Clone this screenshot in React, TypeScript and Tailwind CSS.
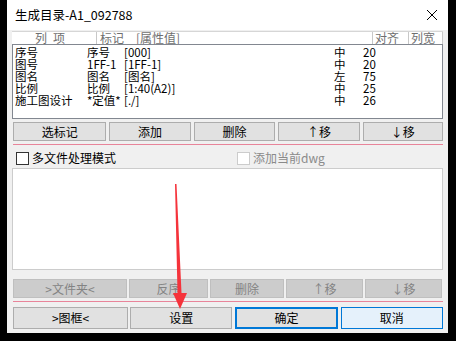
import React from "react";

const font = { fontFamily: '"Noto Sans CJK SC", "Liberation Sans", sans-serif' };

const rows = [
  ["序号", "序号", "[000]", "中", "20"],
  ["图号", "1FF-1", "[1FF-1]", "中", "20"],
  ["图名", "图名", "[图名]", "左", "75"],
  ["比例", "比例", "[1:40(A2)]", "中", "25"],
  ["施工图设计", "*定值*", "[./]", "中", "26"],
];

function Btn({ children, w, disabled }: { children: React.ReactNode; w: string; disabled?: boolean }) {
  return (
    <div
      className={`${w} h-[19px] flex items-center justify-center border text-[12px] leading-none ${
        disabled ? "bg-[#cccccc] border-[#bfbfbf] text-[#838383]" : "bg-[#e1e1e1] border-[#adadad] text-black"
      }`}
    >
      {children}
    </div>
  );
}

export default function App() {
  return (
    <div className="w-[456px] h-[341px] bg-black relative overflow-hidden" style={font}>
      <div className="ml-[7px] w-[441px] h-[333px] bg-[#f0f0f0] flex flex-col">
        <div className="h-[30px] bg-white flex items-center justify-between pl-[8px] pr-[10px]">
          <span className="text-[12.5px] text-black">生成目录-A1_092788</span>
          <svg width="12" height="12" viewBox="0 0 12 12">
            <path d="M1 1 L11 11 M11 1 L1 11" stroke="#000" strokeWidth="1" />
          </svg>
        </div>
        <div className="px-[5px] flex flex-col">
          <div className="mt-[1px] h-[13px] flex items-center text-[12px] leading-none text-[#6f6f6f] bg-white border-t border-[#d6d6d6]">
            <div className="w-[84px] pl-[23px] tracking-[6px]">列项</div>
            <div className="w-[276px] border-l border-[#c8c8c8] pl-[3px] flex gap-[12px]">
              <span>标记</span>
              <span>[属性值]</span>
            </div>
            <div className="w-[36px] border-l border-[#c8c8c8] pl-[2px]">对齐</div>
            <div className="flex-1 border-l border-[#c8c8c8] pl-[2px] border-r">列宽</div>
          </div>
          <div className="h-[75px] bg-white border border-[#828790] pt-[1px] text-[11.5px] leading-[12px] text-black">
            {rows.map((r, i) => (
              <div key={i} className="flex h-[12px] items-center">
                <div className="w-[74px] pl-[2px]">{r[0]}</div>
                <div className="w-[37px]">{r[1]}</div>
                <div className="w-[210px]">{r[2]}</div>
                <div className="w-[29px]">{r[3]}</div>
                <div className="w-[30px]">{r[4]}</div>
              </div>
            ))}
          </div>
          <div className="mt-[3px] flex gap-[3px] ml-[1px]">
            <Btn w="w-[94px]">选标记</Btn>
            <Btn w="w-[82px]">添加</Btn>
            <Btn w="w-[82px]">删除</Btn>
            <Btn w="w-[82px]">↑移</Btn>
            <Btn w="w-[81px]">↓移</Btn>
          </div>
          <div className="mt-[3px] ml-[1px] h-[1px] bg-[#e8849a]" />
          <div className="mt-[6px] h-[14px] flex items-center text-[12px] leading-none">
            <div className="ml-[4px] w-[13px] h-[13px] border border-[#333] bg-white" />
            <span className="ml-[3px]">多文件处理模式</span>
            <div className="ml-[121px] w-[13px] h-[13px] border border-[#cccccc] bg-white" />
            <span className="ml-[3px] text-[#8a8a8a]">添加当前dwg</span>
          </div>
          <div className="mt-[3px] h-[102px] bg-white border border-[#cccccc]" />
          <div className="mt-[9px] flex gap-[2px] ml-[1px]">
            <Btn w="w-[114px]" disabled>&gt;文件夹&lt;</Btn>
            <Btn w="w-[79px]" disabled>反序</Btn>
            <Btn w="w-[74px]" disabled>删除</Btn>
            <Btn w="w-[77px]" disabled>↑移</Btn>
            <Btn w="w-[77px]" disabled>↓移</Btn>
          </div>
          <div className="mt-[3px] ml-[1px] h-[1px] bg-[#e8849a]" />
          <div className="mt-[5px] flex gap-[2px] ml-[1px]">
            <div className="w-[116px] h-[22px] flex items-center justify-center bg-[#e1e1e1] border border-[#adadad] text-[12px]">&gt;图框&lt;</div>
            <div className="w-[103px] h-[22px] flex items-center justify-center bg-[#e1e1e1] border border-[#adadad] text-[12px]">设置</div>
            <div className="ml-[1px] w-[103px] h-[22px] flex items-center justify-center bg-[#e1e1e1] border-2 border-[#0078d7] text-[12px]">确定</div>
            <div className="ml-[1px] w-[103px] h-[22px] flex items-center justify-center bg-[#e5f1fb] border border-[#0078d7] text-[12px]">取消</div>
          </div>
        </div>
      </div>
      <svg className="absolute left-0 top-0 pointer-events-none" width="456" height="341">
        <polygon points="175,184 176.5,184 181.5,293 187,293 180,309 173,293 177.5,293" fill="#f5333b" />
      </svg>
    </div>
  );
}
